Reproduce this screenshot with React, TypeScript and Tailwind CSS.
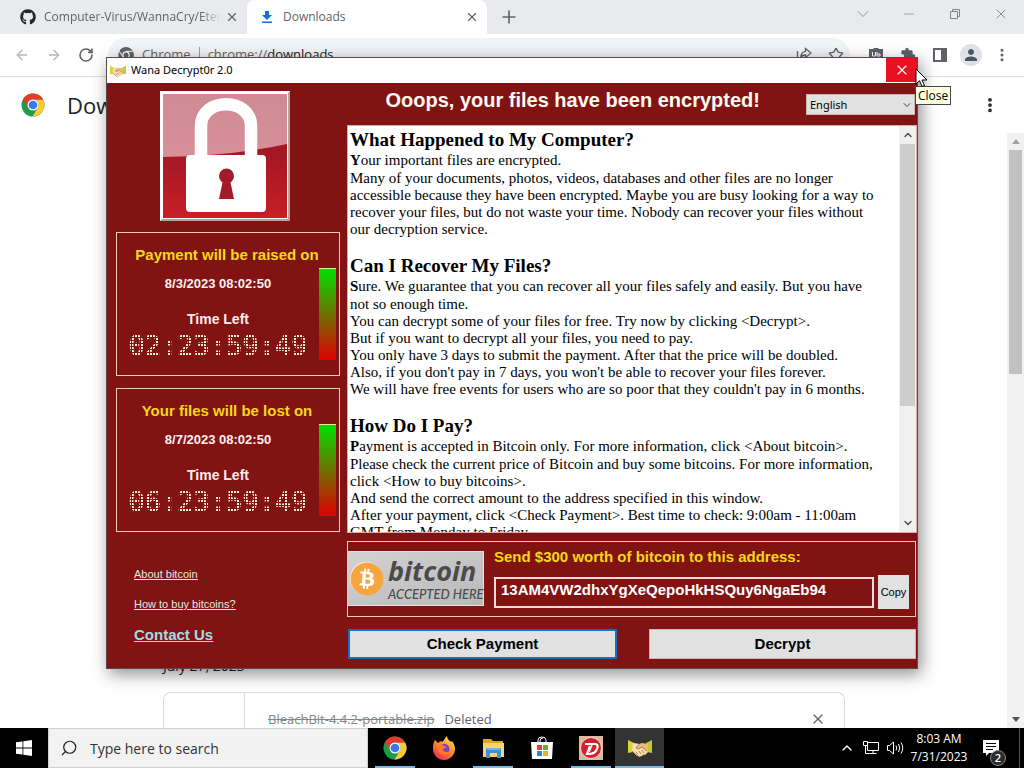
import React from "react";
import {
  ArrowLeft,
  ArrowRight,
  ChevronDown,
  ChevronUp,
  Minus,
  MoreVertical,
  Plus,
  RotateCw,
  Search,
  Star,
  X,
} from "lucide-react";
import { FaBitcoin, FaGithub } from "react-icons/fa";
import { MdExtension, MdPerson } from "react-icons/md";

function ChromeLogo({ className, mono = false }: { className: string; mono?: boolean }) {
  const [red, green, yellow, blue] = mono
    ? ["#5f6368", "#5f6368", "#5f6368", "#5f6368"]
    : ["#e33b2e", "#1e9a4b", "#fcc934", "#3b78e7"];
  return (
    <svg viewBox="0 0 48 48" className={className} aria-hidden="true">
      <circle cx="24" cy="24" r="23" fill={green} />
      <path d="M24 13h20.2A23 23 0 0 1 23 47l10.5-17.5A11 11 0 0 0 24 13z" fill={yellow} />
      <path d="M4.1 12.5A23 23 0 0 1 44.2 13H24a11 11 0 0 0-10 7l.5 9.5z" fill={red} />
      <circle cx="24" cy="24" r="11" fill="#fff" />
      {mono && <path d="M24 13h20M33.500 29.500L23 47M14.500 29.500L4 12.500" stroke="#fff" strokeWidth="3" />}
      <circle cx="24" cy="24" r={mono ? 7.5 : 8.6} fill={blue} />
    </svg>
  );
}

function Handshake({ className }: { className: string }) {
  return (
    <svg viewBox="0 0 24 20" className={className} aria-hidden="true">
      <path d="M0 2l6 3-1 9-5 1z" fill="#d8d82a" />
      <path d="M24 2l-6 3 1 9 5 1z" fill="#c9cc20" />
      <path d="M4 5l7 1 3-1 6 1v7l-6 5-3 1-7-6z" fill="#e7bd84" />
      <path d="M5 5l6 1-3 4 2 1 4-2 6 5-3 3-2-1-2 2-2-1-2 1-5-5z" fill="#f8deb0" />
      <path d="M11 6L8 10l2 1 4-2 5 4M8 14l2 2M11 13l2 3M14 12l2 3M4 13l6 5" fill="none" stroke="#7b4c1c" strokeWidth=".6" />
    </svg>
  );
}

function Padlock() {
  return (
    <svg viewBox="0 0 124 124" className="size-full" aria-hidden="true">
      <defs>
        <linearGradient id="lockRed" x1="0" y1="0" x2="0" y2="1">
          <stop offset="0" stopColor="#8a1220" />
          <stop offset=".55" stopColor="#a81924" />
          <stop offset="1" stopColor="#c81f28" />
        </linearGradient>
        <linearGradient id="lockPink" x1="0" y1="0" x2="0" y2="1">
          <stop offset="0" stopColor="#cf8a93" />
          <stop offset="1" stopColor="#d7909a" />
        </linearGradient>
      </defs>
      <rect width="124" height="124" fill="url(#lockRed)" />
      <path d="M0 0h124v50Q70 62 0 63z" fill="url(#lockPink)" />
      <path d="M38 66V32C38 3 88 3 88 32v34" fill="none" stroke="#fff" strokeWidth="12.500" />
      <rect x="23" y="61" width="80" height="57" rx="4" fill="#fff" />
      <circle cx="63.500" cy="82" r="7.500" fill="#a31a28" />
      <path d="M60 86h7l4 19H56z" fill="#a31a28" />
    </svg>
  );
}

function BrowserTabs() {
  return (
    <header className="flex h-[34px] shrink-0 bg-[#e8eaed] text-xs text-[#5f6368]">
      <div className="flex w-[247px] items-center pl-5 pr-2">
        <FaGithub className="size-4 shrink-0 text-[#24292f]" />
        <span className="ml-2 flex-1 overflow-hidden whitespace-nowrap [mask-image:linear-gradient(to_right,black_88%,transparent)]">
          Computer-Virus/WannaCry/Etern
        </span>
        <button aria-label="Close tab" className="ml-1">
          <X className="size-[14px]" strokeWidth={2} />
        </button>
      </div>
      <div className="flex w-[240px] items-center rounded-t-lg bg-white pl-3 pr-2">
        <svg viewBox="0 0 16 16" className="size-4" aria-hidden="true">
          <path d="M6 2h4v4h3L8 11 3 6h3zM3 12.500h10V14H3z" fill="#1a6fd0" />
        </svg>
        <span className="ml-2 flex-1">Downloads</span>
        <button aria-label="Close tab">
          <X className="size-[14px]" strokeWidth={2} />
        </button>
      </div>
      <button aria-label="New tab" className="ml-3">
        <Plus className="size-5" strokeWidth={2} />
      </button>
      <div className="ml-auto flex items-center gap-[30px] pb-[6px] pr-[15px] text-[#808387]">
        <button aria-label="Search tabs"><ChevronDown className="size-5 -mx-[2px]" strokeWidth={1} /></button>
        <button aria-label="Minimize"><Minus className="size-4" strokeWidth={1} /></button>
        <button aria-label="Restore">
          <svg viewBox="0 0 16 16" className="size-4" fill="none" stroke="currentColor" aria-hidden="true">
            <path d="M3.500 5.500h7v7h-7zM5.500 5.500v-2h7v7h-2" />
          </svg>
        </button>
        <button aria-label="Close window"><X className="size-4" strokeWidth={1.3} /></button>
      </div>
    </header>
  );
}

function Toolbar() {
  return (
    <nav className="flex h-[43px] shrink-0 items-center border-b border-[#dadce0] bg-white text-[#5f6368]">
      <div className="flex w-[108px] gap-4 pl-[14px]">
        <button aria-label="Back"><ArrowLeft className="size-4 text-[#b5b7ba]" /></button>
        <button aria-label="Forward"><ArrowRight className="size-4 text-[#b5b7ba]" /></button>
        <button aria-label="Reload"><RotateCw className="size-4" strokeWidth={2.4} /></button>
      </div>
      <div className="flex h-[34px] flex-1 items-center rounded-full bg-[#f1f3f4] pl-[10px] pr-[6px] text-[13px]">
        <ChromeLogo className="size-4" mono />
        <span className="ml-2">Chrome</span>
        <span className="mx-2 h-4 w-px bg-[#9aa0a6]" />
        <span>chrome://<span className="text-[#202124]">downloads</span></span>
        <svg viewBox="0 0 16 16" className="ml-auto size-4" fill="none" stroke="currentColor" strokeWidth="1.300" aria-hidden="true">
          <path d="M1.500 4v10h11v-3M9.500 1.500L15 6l-5.500 4.500V8Q6 8 4.500 11 5 5 9.500 4.300z" />
        </svg>
        <Star className="ml-4 size-4" />
      </div>
      <div className="flex items-center gap-4 pl-[18px] pr-[14px]">
        <svg viewBox="0 0 16 16" className="size-4" aria-hidden="true">
          <path d="M1 2h4l1-1h4l1 1h4v9l-7 5-7-5z" fill="#5f6368" />
          <path d="M4.500 5v4h3V5M9 5v4h3V7H9" fill="none" stroke="#fff" />
        </svg>
        <MdExtension className="size-4" />
        <svg viewBox="0 0 16 16" className="size-4" aria-hidden="true">
          <path d="M1 1h14v14H1zM3 3v10h6V3z" fill="#5f6368" fillRule="evenodd" />
        </svg>
        <span className="-mx-1 flex size-[22px] items-center justify-center rounded-full bg-[#dfe1e6]">
          <MdPerson className="size-[18px] text-[#4a5568]" />
        </span>
        <button aria-label="Menu"><MoreVertical className="size-4" strokeWidth={2.5} /></button>
      </div>
    </nav>
  );
}

function Browser() {
  return (
    <main className="flex min-h-0 flex-1 flex-col overflow-hidden bg-white">
      <BrowserTabs />
      <Toolbar />
      <div className="flex h-14 shrink-0 items-center pl-[21px] pr-[25px]">
        <ChromeLogo className="size-6" />
        <h1 className="ml-[22px] flex-1 text-[22px] text-[#202124]">Downloads</h1>
        <button aria-label="More actions"><MoreVertical className="size-[18px] text-[#202124]" strokeWidth={3} /></button>
      </div>
      <div className="flex min-h-0 flex-1">
        <section className="flex min-w-0 flex-1 flex-col justify-end pl-[163px] pr-[162px]">
          <h2 className="mb-4 text-[14px] leading-5 text-[#202124]">July 27, 2023</h2>
          <div className="flex h-9 rounded-t-lg border border-b-0 border-[#dadce0] text-[13px] leading-4 text-[#5f6368]">
            <div className="w-[81px] border-r border-[#dadce0]" />
            <div className="flex flex-1 gap-[10px] pl-[23px] pt-[18px]">
              <s className="text-[#80868b]">BleachBit-4.4.2-portable.zip</s>
              <span>Deleted</span>
            </div>
            <button aria-label="Remove from list" className="mr-[18px] mt-[18px] self-start">
              <X className="size-4" strokeWidth={1.8} />
            </button>
          </div>
        </section>
        <div className="flex w-[17px] flex-col items-center bg-[#f1f1f1]">
          <span className="mt-[6px] border-x-4 border-b-[5px] border-x-transparent border-b-[#a3a3a3]" />
          <span className="mt-[6px] h-[224px] w-[13px] bg-[#c1c1c1]" />
          <span className="mb-[6px] mt-auto border-x-4 border-t-[5px] border-x-transparent border-t-[#505050]" />
        </div>
      </div>
    </main>
  );
}

function Countdown({ title, date, left }: { title: string; date: string; left: string }) {
  return (
    <section className="flex h-[144px] w-full border border-[#f0cdb8] pt-3">
      <div className="flex min-w-0 flex-1 flex-col items-center whitespace-nowrap text-center font-bold text-white">
        <h3 className="ml-[18px] text-[15px] leading-5 text-[#f2d818]">{title}</h3>
        <p className="mt-[11px] text-[13px] leading-4 text-[#fff0ee]">{date}</p>
        <p className="mt-[19px] text-[14px] leading-4 text-[#ffe9ec]">Time Left</p>
        <time className="mt-[5px] bg-[repeating-linear-gradient(to_right,#fff3d8_0_2px,transparent_2px_3px)] bg-clip-text font-['DejaVu_Sans_Mono',monospace] text-[27px] font-normal leading-7 text-transparent [-webkit-text-stroke:1px_transparent] [mask-image:repeating-linear-gradient(to_bottom,black_0_2px,transparent_2px_3px)]">
          {left}
        </time>
      </div>
      <div className="mr-[3px] mt-[23px] h-[92px] w-[17px] border-t border-[#d8f0a0] bg-[linear-gradient(to_bottom,#00e000,#e00000)]" />
    </section>
  );
}

const sections = [
  {
    title: "What Happened to My Computer?",
    lines: [
      "Your important files are encrypted.",
      "Many of your documents, photos, videos, databases and other files are no longer",
      "accessible because they have been encrypted. Maybe you are busy looking for a way to",
      "recover your files, but do not waste your time. Nobody can recover your files without",
      "our decryption service.",
    ],
  },
  {
    title: "Can I Recover My Files?",
    lines: [
      "Sure. We guarantee that you can recover all your files safely and easily. But you have",
      "not so enough time.",
      "You can decrypt some of your files for free. Try now by clicking <Decrypt>.",
      "But if you want to decrypt all your files, you need to pay.",
      "You only have 3 days to submit the payment. After that the price will be doubled.",
      "Also, if you don't pay in 7 days, you won't be able to recover your files forever.",
      "We will have free events for users who are so poor that they couldn't pay in 6 months.",
    ],
  },
  {
    title: "How Do I Pay?",
    lines: [
      "Payment is accepted in Bitcoin only. For more information, click <About bitcoin>.",
      "Please check the current price of Bitcoin and buy some bitcoins. For more information,",
      "click <How to buy bitcoins>.",
      "And send the correct amount to the address specified in this window.",
      "After your payment, click <Check Payment>. Best time to check: 9:00am - 11:00am",
      "GMT from Monday to Friday.",
    ],
  },
];

function Message() {
  return (
    <div className="flex min-h-0 flex-1 overflow-hidden border border-[#d9a9a6] bg-white text-black">
      <article className="min-w-0 flex-1 overflow-hidden whitespace-nowrap pl-[2px] pt-[3px] font-['Liberation_Serif',serif] text-[15px] leading-[17px]">
        {sections.map((s) => (
          <section key={s.title} className="mb-[17px]">
            <h3 className="text-[19px] font-bold leading-[22px]">{s.title}</h3>
            {s.lines.map((line, i) =>
              i === 0 ? (
                <p key={line} className="leading-[19px]">
                  <b>{line[0]}</b>
                  {line.slice(1)}
                </p>
              ) : (
                <p key={line}>{line}</p>
              ),
            )}
          </section>
        ))}
      </article>
      <div className="flex w-[17px] flex-col items-center bg-[#f0f0f0] text-[#505050]">
        <ChevronUp className="my-[3px] size-3" strokeWidth={3} />
        <span className="h-[262px] w-[15px] bg-[#cdcdcd]" />
        <ChevronDown className="mb-[3px] mt-auto size-3" strokeWidth={3} />
      </div>
    </div>
  );
}

function Dialog() {
  return (
    <div
      role="dialog"
      aria-label="Wana Decrypt0r 2.0"
      className="absolute left-[106px] top-[57px] flex h-[612px] w-[812px] flex-col border border-[#5c4a4a] bg-[#821313] font-['Liberation_Sans',Arial,sans-serif] shadow-[3px_5px_16px_rgba(0,0,0,0.45)]"
    >
      <div className="flex h-[25px] shrink-0 items-center bg-white pl-[3px] font-['Noto_Sans',sans-serif] text-xs text-black">
        <Handshake className="h-[14px] w-4" />
        <span className="ml-[5px] flex-1 text-[11px]">Wana Decrypt0r 2.0</span>
        <button aria-label="Close" className="flex h-6 w-[31px] items-center justify-center self-start bg-[#e81123] text-white">
          <X className="size-4" strokeWidth={1.7} />
        </button>
      </div>
      <div className="flex min-h-0 flex-1 gap-[7px] pl-[9px]">
        <aside className="flex w-[224px] shrink-0 flex-col items-start pt-2">
          <div className="ml-11 size-[130px] border-2 border-b-[#b9a0a0] border-l-white border-r-[#b9a0a0] border-t-white">
            <div className="size-full border border-white"><Padlock /></div>
          </div>
          <div className="mt-[11px] flex w-full flex-col gap-3">
            <Countdown title="Payment will be raised on" date="8/3/2023 08:02:50" left="02:23:59:49" />
            <Countdown title="Your files will be lost on" date="8/7/2023 08:02:50" left="06:23:59:49" />
          </div>
          <div className="ml-[18px] mt-[34px] flex flex-col items-start gap-[14px] text-[11px] leading-4 text-[#dcebe2] underline">
            <a href="#about">About bitcoin</a>
            <a href="#buy">How to buy bitcoins?</a>
            <a href="#contact" className="text-[15px] font-bold leading-[18px] text-[#a3dce2]">Contact Us</a>
          </div>
        </aside>
        <div className="flex min-w-0 flex-1 flex-col pb-[9px]">
          <div className="flex h-[42px] shrink-0 items-start justify-end gap-[46px] pr-[2px]">
            <h2 className="whitespace-nowrap pt-[3px] text-[20px] font-bold leading-7 text-[#fffaf0]">
              Ooops, your files have been encrypted!
            </h2>
            <label className="relative mt-[11px] block w-[109px]">
              <span className="hidden">Language</span>
              <select
                aria-label="Language"
                className="block h-[21px] w-full appearance-none border border-[#c9b4b4] bg-[#e1e1e1] pl-[3px] font-['Noto_Sans',sans-serif] text-[11px] leading-[19px] text-black"
              >
                <option>English</option>
              </select>
              <ChevronDown className="absolute right-[2px] top-[5px] size-3 text-[#444]" strokeWidth={2} />
            </label>
          </div>
          <Message />
          <section className="mr-px mt-2 flex h-[76px] shrink-0 items-start border border-[#f0cdb8]">
            <div className="mt-[9px] flex h-[55px] w-[136px] shrink-0 items-center border border-l-0 border-[#e6e0e0] bg-gradient-to-br from-[#d2d2d2] to-[#b9b9b9]">
              <span className="ml-[2px] flex size-[33px] shrink-0 items-center justify-center rounded-full bg-white">
                <FaBitcoin className="size-[34px] shrink-0 -rotate-[10deg] text-[#f6a541]" />
              </span>
              <div className="ml-[5px] whitespace-nowrap italic text-[#4b4b4d]">
                <p className="font-['Open_Sans',sans-serif] text-[27px] font-bold leading-[30px]">bitcoin</p>
                <p className="font-['Lato',sans-serif] text-[13px] font-medium leading-4">ACCEPTED HERE</p>
              </div>
            </div>
            <div className="ml-[10px] min-w-0 flex-1 pt-[5px]">
              <label htmlFor="address" className="block text-[15px] font-bold leading-5 text-[#f2d818]">
                Send $300 worth of bitcoin to this address:
              </label>
              <input
                id="address"
                readOnly
                value="13AM4VW2dhxYgXeQepoHkHSQuy6NgaEb94"
                className="mt-[10px] block h-[31px] w-full border-2 border-[#f3dcdc] bg-transparent pb-[6px] pl-[5px] text-[15px] font-bold text-white outline-none"
              />
            </div>
            <button className="ml-1 mr-[6px] mt-[33px] h-[34px] w-[31px] bg-[#e1e1e1] text-[11px] text-black">Copy</button>
          </section>
          <div className="mr-px mt-3 flex shrink-0 gap-8 pl-px text-[15px] font-bold text-black">
            <button className="h-[30px] flex-1 border-2 border-[#1b6fbb] bg-[#e1e1e1]">Check Payment</button>
            <button className="h-[30px] flex-1 border border-[#c9b4b4] bg-[#e1e1e1]">Decrypt</button>
          </div>
        </div>
      </div>
    </div>
  );
}

function Firefox() {
  return (
    <svg viewBox="0 0 24 24" className="size-6" aria-hidden="true">
      <defs>
        <linearGradient id="fox" x1=".8" y1="0" x2=".2" y2="1">
          <stop offset="0" stopColor="#fff04a" />
          <stop offset=".4" stopColor="#ff9a1f" />
          <stop offset="1" stopColor="#f0245a" />
        </linearGradient>
      </defs>
      <path d="M3 4l3 3 3-2 1 1c2-1 2-3 5-6 0 3 2 4 4 6l1-1c2 3 3 5 3 8 0 6-5 11-11 11S1 19 1 13c0-3 0-6 2-9z" fill="url(#fox)" />
      <circle cx="12.500" cy="13" r="5" fill="#7a3fd0" />
      <path d="M4 9c3-2 6-1 8 1l3 1-4 2c0 3 4 4 7 2-2 4-8 5-11 1-1-2 0-4 1-5z" fill="#ff7b28" />
    </svg>
  );
}

function Folder() {
  return (
    <svg viewBox="0 0 24 24" className="size-6" aria-hidden="true">
      <path d="M2 3h8l2 2h10v4H2z" fill="#e0a526" />
      <path d="M2 7h21v14H2z" fill="#fbd664" />
      <path d="M5 13q0-1 1-1h13q1 0 1 1v9h-4v-5H9v5H5z" fill="#3f92d2" />
      <path d="M6 12h13v2H6z" fill="#6fb7e8" />
    </svg>
  );
}

function Store() {
  return (
    <svg viewBox="0 0 24 24" className="size-6" aria-hidden="true">
      <path d="M8 7V4q0-3 4-3t4 3v3M10 7V5q0-3 3-3" fill="none" stroke="#fff" />
      <path d="M1 6h22l-1 17H2z" fill="#fff" />
      <path d="M7 9h5v5H7z" fill="#d8492a" />
      <path d="M13 9h5v5h-5z" fill="#72a830" />
      <path d="M7 15h5v5H7z" fill="#2b87cf" />
      <path d="M13 15h5v5h-5z" fill="#eeb028" />
    </svg>
  );
}

function Disc() {
  return (
    <svg viewBox="0 0 24 24" className="size-6" aria-hidden="true">
      <path d="M0 0h24v24H0z" fill="#d9b9a0" />
      <circle cx="12" cy="12" r="10.500" fill="#d41f2c" stroke="#f3dcd0" />
      <path d="M6 8h10q4 0 2 5t-8 5H8l3-8" fill="none" stroke="#fff" strokeWidth="2.200" />
      <path d="M13 9l-3 7" stroke="#fff" strokeWidth="1.500" />
    </svg>
  );
}

function TaskItem({ label, open, active, children }: { label: string; open?: boolean; active?: boolean; children: React.ReactNode }) {
  return (
    <button
      aria-label={label}
      className={`flex h-full w-[49px] flex-col items-center justify-end ${active ? "bg-[#333333]" : ""}`}
    >
      <span className="mb-[6px]">{children}</span>
      <span className={`h-[2px] ${open ? "bg-[#76b9ed]" : ""} ${active ? "w-full" : "w-10"}`} />
    </button>
  );
}

function Taskbar() {
  return (
    <footer className="flex h-10 shrink-0 items-center bg-black text-white">
      <button aria-label="Start" className="flex w-12 justify-center">
        <svg viewBox="0 0 16 16" className="size-4" aria-hidden="true">
          <path d="M0 2.300l6.500-.9v6.200H0zM7.300 1.300L16 0v7.600H7.300zM0 8.400h6.500v6.200L0 13.700zM7.300 8.400H16V16l-8.700-1.300z" fill="#fff" />
        </svg>
      </button>
      <label className="flex h-full w-[320px] items-center border border-[#d0d0d0] bg-[#f2f2f2] pl-[11px] text-[#222]">
        <Search className="size-[18px] -scale-x-100" strokeWidth={1.6} />
        <input
          aria-label="Search"
          placeholder="Type here to search"
          className="ml-3 min-w-0 flex-1 bg-transparent text-[14px] outline-none placeholder:text-[#333]"
        />
      </label>
      <div className="ml-[2px] flex h-full">
        <TaskItem label="Chrome" open><ChromeLogo className="size-6" /></TaskItem>
        <TaskItem label="Firefox"><Firefox /></TaskItem>
        <TaskItem label="File Explorer" open><Folder /></TaskItem>
        <TaskItem label="Store"><Store /></TaskItem>
        <TaskItem label="Decryptor launcher" open><Disc /></TaskItem>
        <TaskItem label="Wana Decrypt0r" open active><Handshake className="size-6" /></TaskItem>
      </div>
      <div className="ml-auto flex h-full items-center">
        <ChevronUp className="size-4" strokeWidth={2} />
        <svg viewBox="0 0 16 16" className="ml-2 size-4" fill="none" stroke="#fff" aria-hidden="true">
          <path d="M4.500 2.500h11v8h-11zM10 10.500v3M6.500 13.500h7M.5 1.500h4v4h-4zM2.500 5.500v8h4" />
        </svg>
        <svg viewBox="0 0 18 16" className="ml-[7px] h-4 w-[18px]" fill="none" stroke="#fff" aria-hidden="true">
          <path d="M1.500 5.500h2l4-3.500v12l-4-3.500h-2zM10 5.500q1.500 2.500 0 5M12.500 4q2.500 4 0 8M15 2.500q3.500 5.500 0 11" />
        </svg>
        <div className="w-[70px] text-center text-xs leading-[18px]">
          <p>8:03 AM</p>
          <p>7/31/2023</p>
        </div>
        <div className="relative ml-2 mr-[13px] h-8 w-6">
          <svg viewBox="0 0 18 18" className="mt-[7px] size-[18px]" aria-hidden="true">
            <path d="M1 1h16v13H7l-3 3v-3H1z" fill="#fff" />
            <path d="M4 4.500h10M4 7.500h10M4 10.500h7" stroke="#000" />
          </svg>
          <span className="absolute -bottom-[2px] right-0 flex size-4 items-center justify-center rounded-full border border-[#888] bg-[#2b2b2b] text-[11px] font-semibold">2</span>
        </div>
        <span className="h-full w-[5px] border-l border-[#555]" />
      </div>
    </footer>
  );
}

export default function App() {
  return (
    <div className="relative flex h-screen flex-col overflow-hidden font-['Open_Sans','Noto_Sans',sans-serif]">
      <Browser />
      <Taskbar />
      <Dialog />
      <div role="tooltip" className="absolute left-[915px] top-[86px] border border-[#444] bg-[#ffffe1] px-[2px] text-[12px] leading-[17px] text-black">
        Close
      </div>
      <svg viewBox="0 0 13 20" className="absolute left-[915px] top-[68px] h-5 w-[13px]" aria-hidden="true">
        <path d="M1 1v15l3.500-3.300L7 18.500l2.500-1L7 12h5z" fill="#fff" stroke="#000" />
      </svg>
    </div>
  );
}
